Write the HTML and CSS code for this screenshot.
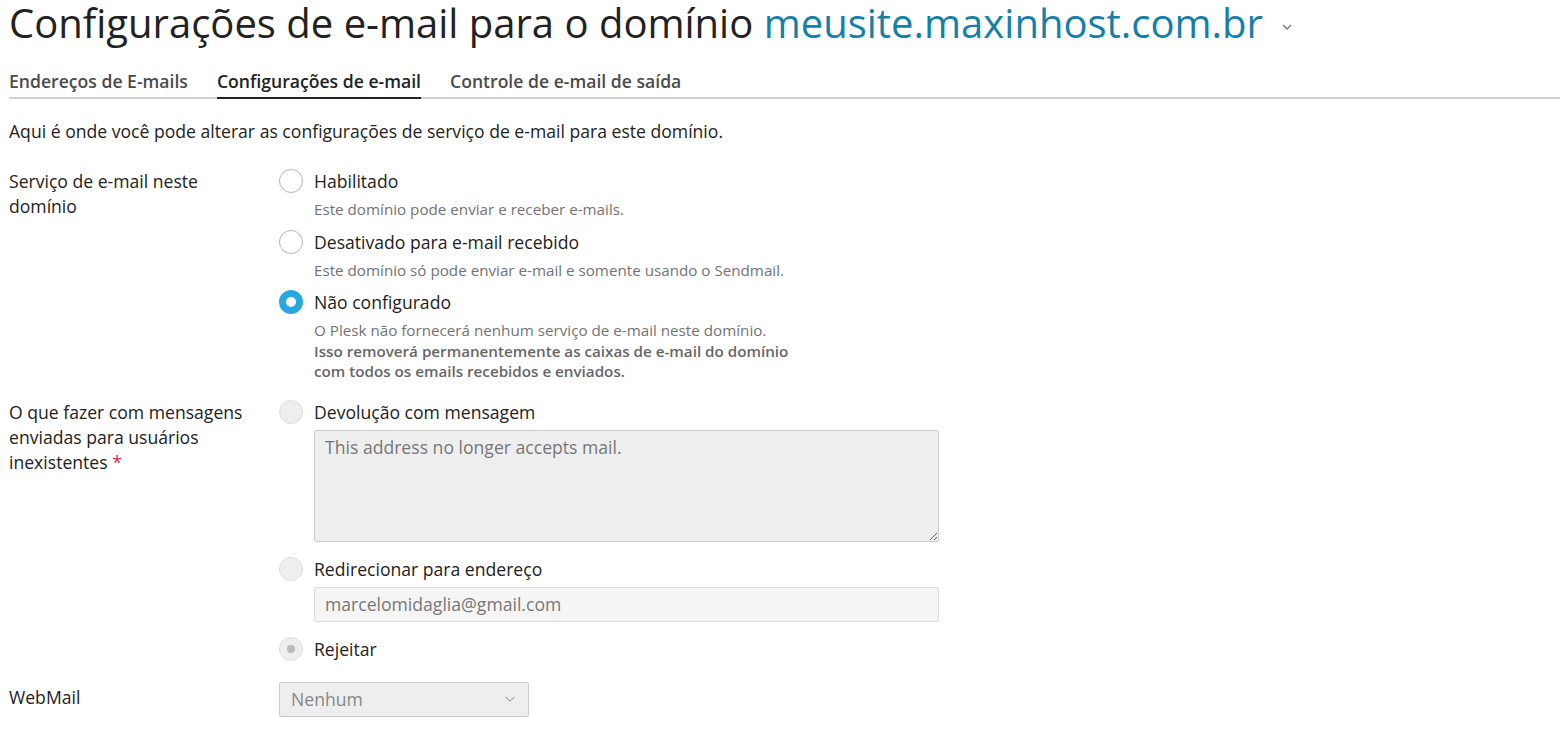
FILE: index.html
```html
<!DOCTYPE html>
<html lang="pt-BR">
<head>
  <meta charset="UTF-8" />
  <title>Configurações de e-mail</title>
  <link rel="stylesheet" href="styles.css">
</head>
<body>
  <div class="page">
    <h1 class="page-title">Configurações de e-mail para o domínio <a class="domain" href="#">meusite.maxinhost.com.br</a>
      <svg class="title-caret" width="12" height="8" viewBox="0 0 12 8"><path d="M2 2l4 4 4-4" fill="none" stroke="#777" stroke-width="1.3"/></svg>
    </h1>

    <!-- Tabs -->
    <div class="tabs">
      <a class="tab" href="#">Endereços de E-mails</a>
      <a class="tab active" href="#">Configurações de e-mail</a>
      <a class="tab" href="#">Controle de e-mail de saída</a>
    </div>

    <p class="intro">Aqui é onde você pode alterar as configurações de serviço de e-mail para este domínio.</p>

    <div class="form-row">
      <div class="form-label">Serviço de e-mail neste domínio</div>
      <div class="form-field">
        <label class="radio"><span class="radio-dot"></span>Habilitado</label>
        <div class="hint">Este domínio pode enviar e receber e-mails.</div>
        <label class="radio"><span class="radio-dot"></span>Desativado para e-mail recebido</label>
        <div class="hint">Este domínio só pode enviar e-mail e somente usando o Sendmail.</div>
        <label class="radio"><span class="radio-dot checked"></span>Não configurado</label>
        <div class="hint">O Plesk não fornecerá nenhum serviço de e-mail neste domínio.<br>
          <b>Isso removerá permanentemente as caixas de e-mail do domínio<br>com todos os emails recebidos e enviados.</b></div>
      </div>
    </div>

    <div class="form-row">
      <div class="form-label">O que fazer com mensagens enviadas para usuários inexistentes&nbsp;<span class="required">*</span></div>
      <div class="form-field">
        <label class="radio"><span class="radio-dot disabled"></span>Devolução com mensagem</label>
        <textarea class="textarea" disabled>This address no longer accepts mail.</textarea>
        <label class="radio"><span class="radio-dot disabled"></span>Redirecionar para endereço</label>
        <input class="input" type="text" value="marcelomidaglia@gmail.com" disabled>
        <label class="radio last"><span class="radio-dot disabled checked-disabled"></span>Rejeitar</label>
      </div>
    </div>

    <div class="form-row">
      <div class="form-label webmail-label">WebMail</div>
      <div class="form-field">
        <div class="select">Nenhum
          <svg width="12" height="8" viewBox="0 0 12 8"><path d="M1.5 2l4.5 4 4.5-4" fill="none" stroke="#aaa" stroke-width="1.1"/></svg>
        </div>
      </div>
    </div>
  </div>
</body>
</html>
```

FILE: styles.css
```css
body {
  margin: 0;
  font-family: "Open Sans", "Noto Sans", sans-serif;
  color: #222;
  background: #fff;
}
.page {
  padding: 0 2px 0 9px;
}
.page-title {
  margin: 0;
  font-size: 40px;
  font-weight: 400;
  line-height: 46px;
  color: #222;
  white-space: nowrap;
}
.domain {
  color: #167fa8;
  text-decoration: none;
}
.title-caret {
  margin-left: 8px;
  vertical-align: middle;
}

/* Tabs */
.tabs {
  display: flex;
  gap: 29px;
  margin-top: 22px;
  border-bottom: 2px solid #d0d0d0;
}
.tab {
  font-size: 17.6px;
  font-weight: 600;
  color: #4b4b4b;
  text-decoration: none;
  line-height: 26px;
  padding-bottom: 3px;
  margin-bottom: -2px;
  border-bottom: 2px solid transparent;
}
.tab.active {
  color: #222;
  border-bottom-color: #222;
}

.intro {
  margin: 20px 0 25px;
  font-size: 17.6px;
  line-height: 25px;
}

/* Form rows */
.form-row {
  display: flex;
  margin-bottom: 8px;
}
.form-label {
  width: 270px;
  flex-shrink: 0;
  font-size: 17.6px;
  line-height: 25px;
  padding-right: 22px;
  box-sizing: border-box;
}
.webmail-label {
  padding-top: 3px;
}
.required {
  color: #d02c4c;
}
.form-field {
  display: flex;
  flex-direction: column;
  align-items: flex-start;
}
.radio {
  display: flex;
  align-items: center;
  gap: 11px;
  font-size: 17.6px;
  line-height: 24px;
  height: 24px;
}
.radio-dot {
  width: 24px;
  height: 24px;
  box-sizing: border-box;
  border: 1px solid #b5b5b5;
  border-radius: 50%;
  background: #fff;
  flex-shrink: 0;
}
.radio-dot.checked {
  border: 7px solid #28a8e0;
  background: #fff;
}
.radio-dot.disabled {
  border-color: #ddd;
  background: #eee;
}
.radio-dot.checked-disabled {
  background: radial-gradient(circle, #bbb 0 4px, #eee 4.5px);
}
.hint {
  margin: 6px 0 10px 35px;
  font-size: 15.2px;
  line-height: 20.5px;
  color: #737373;
}
.hint b {
  font-weight: 600;
  color: #666;
}

.textarea {
  margin: 6px 0 15px 35px;
  width: 625px;
  height: 112px;
  box-sizing: border-box;
  padding: 4px 10px;
  font-family: inherit;
  font-size: 17.6px;
  line-height: 25px;
  color: #777;
  background: #eee;
  border: 1px solid #ccc;
  border-radius: 2px;
  resize: vertical;
}
.input {
  margin: 6px 0 15px 35px;
  width: 625px;
  height: 35px;
  box-sizing: border-box;
  padding: 0 10px;
  font-family: inherit;
  font-size: 17.6px;
  color: #777;
  background: #f5f5f5;
  border: 1px solid #ddd;
  border-radius: 2px;
}
.radio.last {
  margin-bottom: 13px;
}
.select {
  display: flex;
  align-items: center;
  justify-content: space-between;
  width: 250px;
  height: 35px;
  box-sizing: border-box;
  padding: 0 12px 0 11px;
  font-size: 17.6px;
  color: #888;
  background: #eee;
  border: 1px solid #ccc;
  border-radius: 2px;
}
```
